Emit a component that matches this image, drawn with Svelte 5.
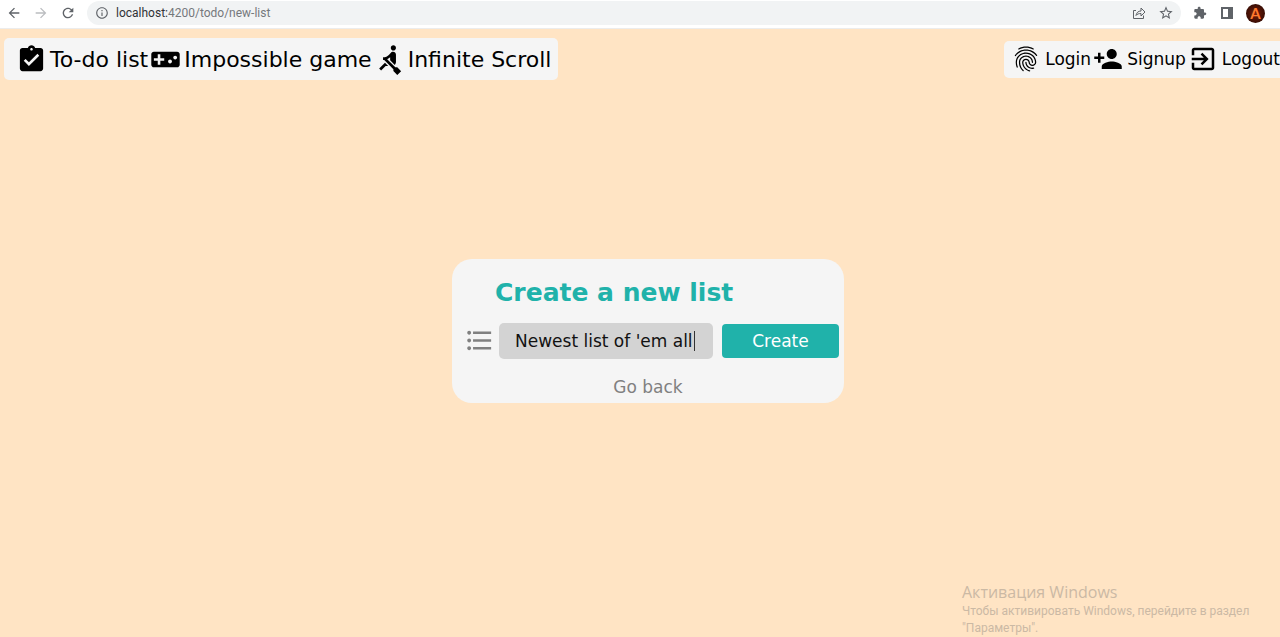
<script>
  let title = $state("Newest list of 'em all");

  const mainLinks = [
    {
      label: 'To-do list',
      path: 'M19 3h-4.18C14.4 1.84 13.3 1 12 1c-1.3 0-2.4.84-2.82 2H5c-1.1 0-2 .9-2 2v14c0 1.1.9 2 2 2h14c1.1 0 2-.9 2-2V5c0-1.1-.9-2-2-2zm-7 0c.55 0 1 .45 1 1s-.45 1-1 1-1-.45-1-1 .45-1 1-1zm-2 14l-4-4 1.41-1.41L10 14.17l6.59-6.59L18 9l-8 8z'
    },
    {
      label: 'Impossible game',
      path: 'M21 6H3c-1.1 0-2 .9-2 2v8c0 1.1.9 2 2 2h18c1.1 0 2-.9 2-2V8c0-1.1-.9-2-2-2zm-10 7H8v3H6v-3H3v-2h3V8h2v3h3v2zm4.5 2c-.83 0-1.5-.67-1.5-1.5s.67-1.5 1.5-1.5 1.5.67 1.5 1.5-.67 1.5-1.5 1.5zm4-3c-.83 0-1.5-.67-1.5-1.5S18.67 9 19.5 9s1.5.67 1.5 1.5-.67 1.5-1.5 1.5z'
    },
    {
      label: 'Infinite Scroll',
      path: 'M8.5 14.5L4 19l1.5 1.5L9 17h2l-2.5-2.5zM15 1c-1.1 0-2 .9-2 2s.9 2 2 2 2-.9 2-2-.9-2-2-2zm6 20.01L18 24l-2.99-3.01V19.5l-7.1-7.09c-.31.05-.61.07-.91.07v-2.16c1.66.03 3.61-.87 4.67-2.04l1.4-1.55c.19-.21.43-.38.69-.5.29-.14.62-.23.96-.23h.03C15.99 6.01 17 7.02 17 8.26v5.75c0 .84-.35 1.61-.92 2.16l-3.58-3.58v-2.27c-.63.52-1.43 1.02-2.29 1.39L16.5 18H18l3 3.01z'
    }
  ];

  const userLinks = [
    {
      label: 'Login',
      path: 'M17.81 4.47c-.08 0-.16-.02-.23-.06C15.66 3.42 14 3 12.01 3c-1.98 0-3.86.47-5.57 1.41-.24.13-.54.04-.68-.2-.13-.24-.04-.55.2-.68C7.82 2.52 9.86 2 12.01 2c2.13 0 3.99.47 6.03 1.52.25.13.34.43.21.67-.09.18-.26.28-.44.28zM3.5 9.72c-.1 0-.2-.03-.29-.09-.23-.16-.28-.47-.12-.7.99-1.4 2.25-2.5 3.75-3.27C9.98 4.04 14 4.03 17.15 5.65c1.5.77 2.76 1.86 3.75 3.25.16.22.11.54-.12.7-.23.16-.54.11-.7-.12-.9-1.26-2.04-2.25-3.39-2.94-2.87-1.47-6.54-1.47-9.4.01-1.36.7-2.5 1.7-3.4 2.96-.08.14-.23.21-.39.21zm6.25 12.07c-.13 0-.26-.05-.35-.15-.87-.87-1.34-1.43-2.01-2.64-.69-1.23-1.05-2.73-1.05-4.34 0-2.97 2.54-5.39 5.66-5.39s5.66 2.42 5.66 5.39c0 .28-.22.5-.5.5s-.5-.22-.5-.5c0-2.42-2.09-4.39-4.66-4.39-2.57 0-4.66 1.97-4.66 4.39 0 1.44.32 2.77.93 3.85.64 1.15 1.08 1.64 1.85 2.42.19.2.19.51 0 .71-.11.1-.24.15-.37.15zm7.17-1.85c-1.19 0-2.24-.3-3.1-.89-1.49-1.01-2.38-2.65-2.38-4.39 0-.28.22-.5.5-.5s.5.22.5.5c0 1.41.72 2.74 1.94 3.56.71.48 1.54.71 2.54.71.24 0 .64-.03 1.04-.1.27-.05.53.13.58.41.05.27-.13.53-.41.58-.57.11-1.07.12-1.21.12zM14.91 22c-.04 0-.09-.01-.13-.02-1.59-.44-2.63-1.03-3.72-2.1-1.4-1.39-2.17-3.24-2.17-5.22 0-1.62 1.38-2.94 3.08-2.94 1.7 0 3.08 1.32 3.08 2.94 0 1.07.93 1.94 2.08 1.94s2.08-.87 2.08-1.94c0-3.77-3.25-6.83-7.25-6.83-2.84 0-5.44 1.58-6.61 4.03-.39.81-.59 1.76-.59 2.8 0 .78.07 2.01.67 3.61.1.26-.03.55-.29.64-.26.1-.55-.04-.64-.29-.49-1.31-.73-2.61-.73-3.96 0-1.2.23-2.29.68-3.24 1.33-2.79 4.28-4.6 7.51-4.6 4.55 0 8.25 3.51 8.25 7.83 0 1.62-1.38 2.94-3.08 2.94s-3.08-1.32-3.08-2.94c0-1.07-.93-1.94-2.08-1.94s-2.08.87-2.08 1.94c0 1.71.66 3.31 1.87 4.51.95.94 1.86 1.46 3.27 1.85.27.07.42.35.35.61-.05.23-.26.38-.47.38z'
    },
    {
      label: 'Signup',
      path: 'M15 12c2.21 0 4-1.79 4-4s-1.79-4-4-4-4 1.79-4 4 1.79 4 4 4zm-9-2V7H4v3H1v2h3v3h2v-3h3v-2H6zm9 4c-2.67 0-8 1.34-8 4v2h16v-2c0-2.66-5.33-4-8-4z'
    },
    {
      label: 'Logout',
      path: 'M10.09 15.59L11.5 17l5-5-5-5-1.41 1.41L12.67 11H3v2h9.67l-2.58 2.59zM19 3H5c-1.11 0-2 .9-2 2v4h2V5h14v14H5v-4H3v4c0 1.1.89 2 2 2h14c1.1 0 2-.9 2-2V5c0-1.1-.9-2-2-2z'
    }
  ];
</script>

<div class="window">
  <div class="toolbar">
    <button class="tool" aria-label="Back">
      <svg viewBox="0 0 24 24"><path d="M20 11H7.83l5.59-5.59L12 4l-8 8 8 8 1.41-1.41L7.83 13H20v-2z" /></svg>
    </button>
    <button class="tool faded" aria-label="Forward">
      <svg viewBox="0 0 24 24"><path d="M12 4l-1.41 1.41L16.17 11H4v2h12.17l-5.58 5.59L12 20l8-8z" /></svg>
    </button>
    <button class="tool" aria-label="Reload">
      <svg viewBox="0 0 24 24"><path d="M17.65 6.35C16.2 4.9 14.21 4 12 4c-4.42 0-7.99 3.58-7.99 8s3.57 8 7.99 8c3.73 0 6.84-2.55 7.73-6h-2.08c-.82 2.33-3.04 4-5.65 4-3.31 0-6-2.69-6-6s2.69-6 6-6c1.66 0 3.14.69 4.22 1.78L13 11h7V4l-2.35 2.35z" /></svg>
    </button>
    <div class="address">
      <svg class="info" viewBox="0 0 24 24"><path d="M11 7h2v2h-2zm0 4h2v6h-2zm1-9C6.48 2 2 6.48 2 12s4.48 10 10 10 10-4.48 10-10S17.52 2 12 2zm0 18c-4.41 0-8-3.59-8-8s3.59-8 8-8 8 3.59 8 8-3.59 8-8 8z" /></svg>
      <span class="url"><b>localhost:</b>4200/todo/new-list</span>
      <button class="tool" aria-label="Share">
        <svg viewBox="0 0 16 16" fill="none" stroke="currentColor"><path d="M5 5.500H2.500v8h10v-3M5 10.500c.5-3 2.300-4.500 5-4.500V3l4 4-4 4V8.500c-2.300 0-3.800.5-5 2z" /></svg>
      </button>
      <button class="tool" aria-label="Bookmark">
        <svg viewBox="0 0 24 24"><path d="M22 9.240l-7.190-.620L12 2 9.190 8.630 2 9.240l5.460 4.730L5.820 21 12 17.270 18.180 21l-1.630-7.030L22 9.240zM12 15.400l-3.760 2.270 1-4.280-3.320-2.880 4.380-.380L12 6.100l1.710 4.040 4.380.380-3.320 2.880 1 4.280L12 15.400z" /></svg>
      </button>
    </div>
    <button class="tool" aria-label="Extensions">
      <svg viewBox="-2 -2 28 28"><path d="M20.500 11H19V7c0-1.100-.9-2-2-2h-4V3.500C13 2.120 11.880 1 10.500 1S8 2.120 8 3.500V5H4c-1.100 0-1.990.9-1.990 2v3.800H3.500c1.490 0 2.700 1.210 2.700 2.700s-1.210 2.700-2.700 2.700H2V20c0 1.100.9 2 2 2h3.800v-1.500c0-1.490 1.210-2.700 2.700-2.700 1.490 0 2.700 1.210 2.700 2.700V22H17c1.100 0 2-.9 2-2v-4h1.500c1.380 0 2.500-1.120 2.500-2.500S21.880 11 20.500 11z" /></svg>
    </button>
    <button class="tool" aria-label="Side panel">
      <svg viewBox="0 0 16 16"><path d="M2 2h12v12H2zM4 4v8h5V4z" fill-rule="evenodd" /></svg>
    </button>
    <button class="avatar" aria-label="Profile">A</button>
  </div>

  <div class="page">
    <header>
      <nav class="links main-links" aria-label="Main">
        {#each mainLinks as link}
          <a href="#top"><svg viewBox="0 0 24 24"><path d={link.path} /></svg><span>{link.label}</span></a>
        {/each}
      </nav>
      <nav class="links user-links" aria-label="Account">
        {#each userLinks as link}
          <a href="#top"><svg viewBox="0 0 24 24"><path d={link.path} /></svg><span>{link.label}</span></a>
        {/each}
      </nav>
    </header>

    <main>
      <form class="card" onsubmit={(e) => e.preventDefault()}>
        <h1>Create a new list</h1>
        <div class="row">
          <label for="title" aria-label="List title">
            <svg viewBox="0 0 24 24"><path d="M4 10.500c-.83 0-1.500.67-1.500 1.500s.67 1.500 1.500 1.500 1.500-.67 1.500-1.500-.67-1.500-1.500-1.500zm0-6c-.83 0-1.500.67-1.500 1.500S3.170 7.500 4 7.500 5.500 6.830 5.500 6 4.830 4.500 4 4.500zm0 12c-.83 0-1.500.68-1.500 1.500s.68 1.500 1.500 1.500 1.500-.68 1.500-1.500-.67-1.500-1.500-1.500zM7 19h14v-2H7v2zm0-6h14v-2H7v2zm0-8v2h14V5H7z" /></svg>
          </label>
          <div class="field">
            <input id="title" type="text" bind:value={title} />
            <span class="caret"></span>
          </div>
          <button class="create" type="submit">Create</button>
        </div>
        <a class="back" href="#top">Go back</a>
      </form>
    </main>

    <aside class="notice">
      <strong>Активация Windows</strong>
      <p>Чтобы активировать Windows, перейдите в раздел "Параметры".</p>
    </aside>
  </div>
</div>

<style>
  :global(body) {
    margin: 0;
    background: #ffe4c4;
  }

  .window {
    display: flex;
    flex-direction: column;
    min-height: 100vh;
    overflow: hidden;
    font-family: Verdana, "DejaVu Sans", sans-serif;
    color: #111;
  }

  svg {
    display: block;
    flex: none;
    fill: currentColor;
  }

  button {
    border: 0;
    padding: 0;
    font-family: inherit;
    cursor: pointer;
  }

  a {
    color: inherit;
    text-decoration: none;
  }

  .toolbar {
    display: flex;
    align-items: center;
    gap: 11px;
    height: 24px;
    padding: 1px 15px 3px 6px;
    background: #fff;
    border-bottom: 1px solid #ececec;
  }

  .tool {
    flex: none;
    background: none;
    color: #5f6368;
  }

  .tool svg {
    width: 16px;
    height: 16px;
  }

  .tool svg[fill="none"] {
    fill: none;
  }

  .faded {
    color: #bbbdc0;
  }

  .address {
    flex: 1;
    display: flex;
    align-items: center;
    gap: 11px;
    height: 24px;
    padding: 0 7px 0 8px;
    border-radius: 12px;
    background: #f1f3f4;
    color: #5f6368;
  }

  .info {
    width: 14px;
    height: 14px;
  }

  .url {
    flex: 1;
    margin-left: -4px;
    font: 12px/16px Roboto, sans-serif;
    color: #75787c;
  }

  .url b {
    font-weight: 400;
    color: #303236;
  }

  .avatar {
    flex: none;
    width: 19px;
    height: 19px;
    border-radius: 50%;
    background: radial-gradient(#7a1f08, #1c0503);
    color: #ff7a2e;
    font: 700 15px/19px Lato, sans-serif;
  }

  .page {
    flex: 1;
    display: flex;
    flex-direction: column;
    background: #ffe4c4;
  }

  header {
    display: flex;
    align-items: center;
    justify-content: space-between;
    padding: 9px 0 0 4px;
  }

  .links {
    display: flex;
    align-items: center;
    gap: 2px;
    box-sizing: border-box;
    background: #f5f5f5;
    white-space: nowrap;
  }

  .links a {
    display: flex;
    align-items: center;
    color: #000;
  }

  .main-links {
    height: 42px;
    padding: 1px 7px 0 12px;
    border-radius: 5px;
    font-size: 22px;
  }

  .main-links a {
    gap: 3px;
  }

  .main-links svg {
    width: 31px;
    height: 31px;
  }

  .user-links {
    height: 37px;
    padding-left: 7px;
    border-radius: 5px 0 0 5px;
    font-size: 17px;
  }

  .user-links a {
    gap: 4px;
  }

  .user-links svg {
    width: 30px;
    height: 30px;
  }

  main {
    flex: 1;
    display: flex;
    align-items: center;
    justify-content: center;
    padding-left: 16px;
  }

  .card {
    display: flex;
    flex-direction: column;
    padding: 17px 5px 4px 12px;
    border-radius: 20px;
    background: #f5f5f5;
  }

  h1 {
    margin: 0 0 14px 31px;
    font-size: 25px;
    line-height: 33px;
    color: #20b2aa;
  }

  .row {
    display: flex;
    align-items: center;
    color: #808080;
  }

  .row label svg {
    width: 31px;
    height: 31px;
  }

  .field {
    position: relative;
    margin: 0 9px 0 4px;
  }

  input {
    display: block;
    box-sizing: border-box;
    width: 214px;
    height: 36px;
    padding: 0 0 0 16px;
    border: 0;
    border-radius: 5px;
    outline: 0;
    background: #d3d3d3;
    color: #111;
    font-family: inherit;
    font-size: 17px;
  }

  .caret {
    position: absolute;
    top: 8px;
    right: 18px;
    width: 1px;
    height: 20px;
    background: #333;
  }

  .create {
    width: 117px;
    height: 34px;
    border-radius: 4px;
    background: #20b2aa;
    color: #fff;
    font-size: 17px;
  }

  .back {
    align-self: center;
    margin: 16px 7px 0 0;
    font-size: 17px;
    line-height: 24px;
    color: #808080;
  }

  .notice {
    align-self: flex-end;
    width: 300px;
    margin-right: 18px;
    font-family: "Open Sans", sans-serif;
    color: #cbb9a4;
  }

  .notice strong {
    display: block;
    font-size: 16px;
    line-height: 22px;
    font-weight: 400;
  }

  .notice p {
    margin: 0;
    font-family: Roboto, sans-serif;
    font-size: 12px;
    line-height: 17px;
  }
</style>
